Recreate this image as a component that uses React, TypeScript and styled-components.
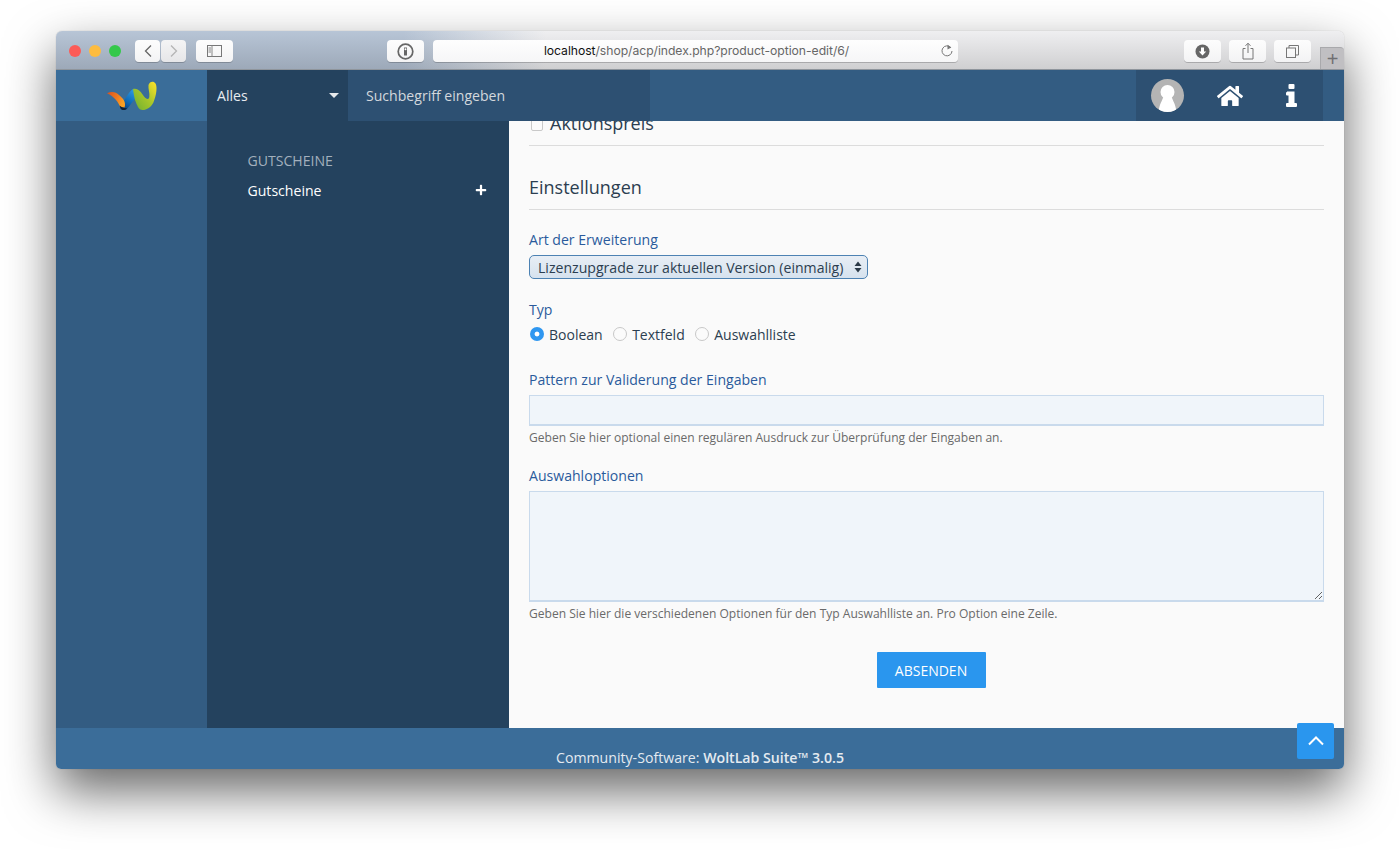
import React from "react";
import styled, { createGlobalStyle } from "styled-components";
import { FaHome, FaPlus } from "react-icons/fa";

const Global = createGlobalStyle`
  html, body { margin: 0; padding: 0; background: #fff; }
  body { font-family: "Open Sans", "Liberation Sans", sans-serif; width: 1400px; height: 850px; overflow: hidden; }
  * { box-sizing: border-box; }
`;
const Page = styled.div`
  padding: 31px 56px 0;
`;
const Win = styled.div`
  position: relative;
  width: 1288px;
  height: 738px;
  display: flex;
  flex-direction: column;
  border-radius: 6px 6px 5px 5px;
  box-shadow: 0 22px 50px rgba(0,0,0,.6), 0 0 1px rgba(0,0,0,.3);
`;
const Toolbar = styled.div`
  height: 39px;
  flex: none;
  display: flex;
  align-items: flex-start;
  padding: 9px 0 0 13px;
  border-radius: 6px 6px 0 0;
  border-bottom: 1px solid #8f959c;
  background:
    linear-gradient(180deg, rgba(255,255,255,.05), rgba(0,0,0,.13)),
    linear-gradient(90deg, #b4c2d4 0, #b4c2d4 27%, #eeeef0 38%, #eeeef0 100%);
`;
const Lights = styled.div`
  display: flex;
  gap: 8px;
  margin-top: 5px;
`;
const Light = styled.span<{ $c: string }>`
  width: 12px;
  height: 12px;
  border-radius: 50%;
  background: ${p => p.$c};
`;
const TBtn = styled.div<{ $w: number; $ml: number; $dim?: boolean }>`
  width: ${p => p.$w}px;
  height: 22px;
  margin-left: ${p => p.$ml}px;
  flex: none;
  display: flex;
  align-items: center;
  justify-content: center;
  border-radius: 4px;
  background: ${p => (p.$dim ? "linear-gradient(#f4f4f5,#e6e6e8)" : "linear-gradient(#fdfdfd,#f3f3f4)")};
  box-shadow: 0 1px 0 rgba(0,0,0,.2);
  color: #6a6a6c;
`;
const Url = styled.div`
  position: relative;
  width: 525px;
  height: 22px;
  margin-left: 9px;
  flex: none;
  border-radius: 4px;
  background: linear-gradient(#fefefe,#f6f6f7);
  box-shadow: 0 1px 0 rgba(0,0,0,.2);
  font: 12.2px/22px "Inter", "Liberation Sans", sans-serif;
  text-align: center;
  padding-left: 2px;
  color: #666;
  letter-spacing: -.05px;
  b { font-weight: 400; color: #111; }
`;
const Reload = styled.span`
  position: absolute;
  right: 4px;
  top: 4px;
  display: flex;
  color: #777;
`;
const NewTab = styled.div`
  width: 24px;
  height: 22px;
  margin: 7px 0 0 9px;
  flex: none;
  background: #c0bfc2;
  border-left: 1px solid #a9a9ac;
  border-top: 1px solid #a9a9ac;
  border-radius: 0 4px 0 0;
  color: #6f6f72;
  font: 300 20px/22px "Liberation Sans", sans-serif;
  text-align: center;
  display: flex;
  align-items: center;
  justify-content: center;
`;
const Header = styled.header`
  height: 51px;
  flex: none;
  display: flex;
  background: #335c82;
  color: #fff;
  font-size: 14.08px;
`;
const LogoCell = styled.div`
  width: 151px;
  display: flex;
  align-items: flex-start;
  justify-content: flex-start;
  padding: 11px 0 0 51px;
  background: #3a6d99;
`;
const Scope = styled.div`
  width: 141px;
  display: flex;
  align-items: center;
  justify-content: space-between;
  padding: 0 9px 0 10px;
  background: #24425e;
  color: #e8ecf0;
`;
const Caret = styled.span`
  width: 0;
  height: 0;
  border: 5px solid transparent;
  border-top: 5px solid #e6e9ec;
  border-bottom: 0;
`;
const Search = styled.div`
  width: 302px;
  display: flex;
  align-items: center;
  padding-left: 18px;
  background: #2d5072;
  color: #d3d8dd;
`;
const Spacer = styled.div`
  flex: 1;
`;
const UserNav = styled.nav`
  width: 187px;
  margin-right: 21px;
  display: flex;
  align-items: center;
  padding-left: 15px;
  background: #2d5072;
`;
const Avatar = styled.div`
  width: 33px;
  height: 33px;
  border-radius: 50%;
  overflow: hidden;
  background: #b4b4b4;
  flex: none;
`;
const NavIcon = styled.span<{ $ml: number }>`
  display: flex;
  margin-left: ${p => p.$ml}px;
`;
const Main = styled.div`
  flex: 1;
  min-height: 0;
  display: grid;
  grid-template-columns: 151px 302px 1fr;
  overflow: hidden;
`;
const Rail = styled.div`
  background: #335c82;
`;
const Side = styled.aside`
  background: #24425e;
  padding: 30px 22px 0 40.5px;
  font-size: 14.08px;
`;
const SideHead = styled.div`
  height: 20px;
  line-height: 20px;
  color: #a3b0bd;
`;
const SideItem = styled.div`
  margin-top: 9px;
  height: 20px;
  display: flex;
  align-items: center;
  justify-content: space-between;
  color: #fff;
`;
const Content = styled.main`
  background: #fafafa;
  padding: 0 20px;
  color: #2c3e50;
  font-size: 14.08px;
`;
const OptionHead = styled.div`
  margin-top: -9px;
  height: 34px;
  padding: 0 0 12px 2px;
  border-bottom: 1px solid #dcdcdc;
  display: flex;
  align-items: center;
  gap: 7px;
  font-size: 18px;
  line-height: 24px;
`;
const SmallBox = styled.span`
  width: 12px;
  height: 15px;
  margin-top: 1px;
  background: #fbfbfb;
  border: 1px solid #c9c9c9;
  border-radius: 2px;
  flex: none;
`;
const SectionTitle = styled.h2`
  margin: 29px 0 0;
  height: 35px;
  font-size: 18px;
  font-weight: 400;
  line-height: 24px;
  border-bottom: 1px solid #dcdcdc;
`;
const Label = styled.label<{ $mt: number }>`
  display: block;
  margin-top: ${p => p.$mt}px;
  height: 20px;
  line-height: 20px;
  color: #2a5a9c;
`;
const SelectWrap = styled.div`
  position: relative;
  width: 339px;
  height: 24px;
  margin-top: 5px;
`;
const Select = styled.select`
  appearance: none;
  width: 100%;
  height: 100%;
  padding: 0 0 0 8px;
  border: 1px solid #4d82b3;
  border-radius: 5px;
  background: linear-gradient(#e8eef5, #d6e2ee);
  color: #2c3e50;
  font: 14.1px "Open Sans", sans-serif;
`;
const Arrows = styled.svg`
  position: absolute;
  right: 6px;
  top: 6px;
  pointer-events: none;
`;
const RadioRow = styled.div`
  display: flex;
  align-items: center;
  height: 20px;
  margin-top: 4px;
  font-size: 14px;
`;
const RadioLabel = styled.label`
  display: flex;
  align-items: center;
  margin-right: 9.5px;
  margin-left: 1px;
  gap: 5px;
`;
const Radio = styled.input`
  appearance: none;
  width: 14px;
  height: 14px;
  margin: 0;
  border-radius: 50%;
  border: 1px solid #c8c8c8;
  background: #fbfbfb;
  &:checked {
    border: 0;
    background: radial-gradient(circle closest-side, #fff 0 2px, #2f97f0 2.8px);
  }
`;
const TextInput = styled.input`
  display: block;
  width: 100%;
  height: 31px;
  margin: 5px 0 0;
  background: #f0f5fa;
  border: 1px solid #c9daec;
  border-bottom-width: 2px;
`;
const Area = styled.textarea`
  display: block;
  width: 100%;
  height: 111px;
  margin: 5px 0 0;
  background: #f0f5fa;
  border: 1px solid #c9daec;
  border-bottom-width: 2px;
  resize: vertical;
`;
const Hint = styled.small`
  display: block;
  margin-top: 3px;
  height: 18px;
  line-height: 18px;
  font-size: 12.06px;
  color: #6a6a6a;
`;
const FormEnd = styled.div`
  display: flex;
  justify-content: center;
  margin-top: 29px;
  padding-left: 9px;
`;
const Submit = styled.button`
  width: 109px;
  height: 36px;
  border: 0;
  border-radius: 1px;
  background: #2a96ee;
  color: #fff;
  font: 14px "Open Sans", sans-serif;
  text-transform: uppercase;
`;
const Footer = styled.footer`
  height: 41px;
  flex: none;
  background: #3b6d99;
  color: #e4eaf0;
  text-align: center;
  font-size: 14.15px;
  line-height: 20px;
  padding-top: 20px;
  overflow: hidden;
  border-radius: 0 0 5px 5px;
  b { font-weight: 600; }
`;
const ToTop = styled.div`
  position: absolute;
  right: 10px;
  bottom: 10px;
  width: 37px;
  height: 36px;
  border-radius: 2px;
  background: #2a96ee;
  display: flex;
  align-items: center;
  justify-content: center;
`;

const Logo = () => (
  <svg width="51" height="29" viewBox="0 0 51 29" style={{ overflow: "visible" }}>
    <defs>
      <linearGradient id="lgO" x1="0" x2="1" y1="0" y2=".4">
        <stop offset="0" stopColor="#d8501f" />
        <stop offset=".6" stopColor="#ee7a20" />
        <stop offset="1" stopColor="#f79f24" />
      </linearGradient>
      <linearGradient id="lgB" x1=".7" x2=".2" y1="0" y2="1">
        <stop offset="0" stopColor="#2f9ae0" />
        <stop offset=".55" stopColor="#0f6dbb" />
        <stop offset="1" stopColor="#0b3f7c" />
      </linearGradient>
      <linearGradient id="lgG" x1=".05" x2=".85" y1=".75" y2="0">
        <stop offset="0" stopColor="#7cb52f" />
        <stop offset=".5" stopColor="#a9c72a" />
        <stop offset="1" stopColor="#f4de2a" />
      </linearGradient>
    </defs>
    <path fill="url(#lgB)" d="M14 26C17 20 21 11 26.300 7.700L30 16C26 19 23 25 20 28C18 29.500 15 29 14 26Z" />
    <path fill="url(#lgO)" d="M0 12.300C4 10 9 10.500 12 14C14 15.500 15.500 17 17 19.500C18 21.500 18.500 24 17.500 26.500L13 26C11.500 21 7 15.500 0 12.300Z" />
    <path fill="#0f2238" d="M12.500 24.500C14 26 17 27 20 27.500C18 29.500 15 29.500 13.500 27.500Z" />
    <path fill="url(#lgG)" d="M26 8C31 6.500 34 11 37 15.500C39 18 41.500 19.500 42.300 16C43 12 41 8 41.500 4C42.500 .5 46.500 -.5 48.500 2.500C50.500 6 49.500 14 46.300 21.700C44 26 40 29 35.500 29C31.500 29 30 24 28 19C27 15 26.500 11 26 8Z" />
  </svg>
);

export default function App() {
  return (
    <Page>
      <Global />
      <Win>
        <Toolbar>
          <Lights>
            <Light $c="#fc5b57" />
            <Light $c="#fdbc40" />
            <Light $c="#34c84a" />
          </Lights>
          <TBtn $w={25} $ml={14}>
            <svg width="10" height="14" viewBox="0 0 10 14"><path d="M8 1.500 2.500 7 8 12.500" fill="none" stroke="#666" strokeWidth="1.3" /></svg>
          </TBtn>
          <TBtn $w={25} $ml={1} $dim>
            <svg width="10" height="14" viewBox="0 0 10 14"><path d="M2 1.500 7.500 7 2 12.500" fill="none" stroke="#b5b5b5" strokeWidth="1.3" /></svg>
          </TBtn>
          <TBtn $w={37} $ml={10}>
            <svg width="15" height="12" viewBox="0 0 15 12"><rect x=".5" y=".5" width="14" height="11" fill="none" stroke="#777" /><path d="M5 .5v11M1.500 3H4M1.500 5H4M1.500 7H4" stroke="#888" fill="none" /></svg>
          </TBtn>
          <TBtn $w={37} $ml={154}>
            <svg width="17" height="17" viewBox="0 0 17 17"><circle cx="8.500" cy="8.500" r="7.300" fill="none" stroke="#666" strokeWidth="1.700" /><path d="M7 4.500h3v8H7z" fill="#666" /><circle cx="8.500" cy="6.300" r="1" fill="#fff" /></svg>
          </TBtn>
          <Url>
            <b>localhost</b>/shop/acp/index.php?product-option-edit/6/
            <Reload>
              <svg width="14" height="14" viewBox="0 0 14 14"><path d="M10.800 3.600A5 5 0 1 0 12 7" fill="none" stroke="#777" strokeWidth="1" /><path d="M7.500 0.800 11.300 3.400 7.500 5.400Z" fill="#777" /></svg>
            </Reload>
          </Url>
          <TBtn $w={37} $ml={226}>
            <svg width="15" height="15" viewBox="0 0 15 15"><circle cx="7.500" cy="7.500" r="7" fill="#666" /><path d="M6 3.500h3v4h2.200l-3.700 4-3.700-4H6z" fill="#fff" /></svg>
          </TBtn>
          <TBtn $w={37} $ml={8}>
            <svg width="12" height="18" viewBox="0 0 12 18"><path d="M3.500 6.500H1v10.500h10V6.500H8.500" fill="none" stroke="#777" /><path d="M6 11V1.500M3.500 3.800 6 1.200l2.500 2.600" fill="none" stroke="#777" /></svg>
          </TBtn>
          <TBtn $w={37} $ml={8}>
            <svg width="13" height="13" viewBox="0 0 13 13"><rect x=".5" y="3" width="9" height="9.500" fill="none" stroke="#777" /><path d="M3 3V.5h9.500V10H9.500" fill="none" stroke="#777" /></svg>
          </TBtn>
          <NewTab>+</NewTab>
        </Toolbar>
        <Header>
          <LogoCell><Logo /></LogoCell>
          <Scope>Alles<Caret /></Scope>
          <Search>Suchbegriff eingeben</Search>
          <Spacer />
          <UserNav>
            <Avatar>
              <svg width="33" height="33" viewBox="0 0 33 33">
                <circle cx="16.500" cy="13" r="7" fill="#fff" />
                <path d="M12.500 17h8c1 5 4 7 5 16H7.500c1-9 4-11 5-16z" fill="#fff" />
              </svg>
            </Avatar>
            <NavIcon $ml={33}><FaHome size={26} color="#fff" /></NavIcon>
            <NavIcon $ml={43}>
              <svg width="11" height="23" viewBox="0 0 11 23"><rect x="2.500" y="0" width="6" height="5" rx="1" fill="#fff" /><path d="M1 7.500h7.500V19H10a1 1 0 0 1 1 1v2a1 1 0 0 1-1 1H1a1 1 0 0 1-1-1v-2a1 1 0 0 1 1-1h1.500v-7.500H1a1 1 0 0 1-1-1v-1.500a1 1 0 0 1 1-1z" fill="#fff" /></svg>
            </NavIcon>
          </UserNav>
        </Header>
        <Main>
          <Rail />
          <Side>
            <SideHead>GUTSCHEINE</SideHead>
            <SideItem>Gutscheine<FaPlus size={12} color="#fff" /></SideItem>
          </Side>
          <Content>
            <OptionHead><SmallBox />Aktionspreis</OptionHead>
            <SectionTitle>Einstellungen</SectionTitle>
            <Label $mt={20}>Art der Erweiterung</Label>
            <SelectWrap>
              <Select defaultValue="a"><option value="a">Lizenzupgrade zur aktuellen Version (einmalig)</option></Select>
              <Arrows width="8" height="12" viewBox="0 0 8 12"><path d="M4 .5 7.500 5H.5zM4 11.500 .5 7h7z" fill="#2b3a48" /></Arrows>
            </SelectWrap>
            <Label $mt={21}>Typ</Label>
            <RadioRow>
              <RadioLabel><Radio type="radio" name="t" defaultChecked />Boolean</RadioLabel>
              <RadioLabel><Radio type="radio" name="t" />Textfeld</RadioLabel>
              <RadioLabel><Radio type="radio" name="t" />Auswahlliste</RadioLabel>
            </RadioRow>
            <Label $mt={26}>Pattern zur Validerung der Eingaben</Label>
            <TextInput />
            <Hint>Geben Sie hier optional einen regulären Ausdruck zur Überprüfung der Eingaben an.</Hint>
            <Label $mt={19}>Auswahloptionen</Label>
            <Area />
            <Hint>Geben Sie hier die verschiedenen Optionen für den Typ Auswahlliste an. Pro Option eine Zeile.</Hint>
            <FormEnd><Submit>Absenden</Submit></FormEnd>
          </Content>
        </Main>
        <Footer>Community-Software: <b>WoltLab Suite™ 3.0.5</b></Footer>
        <ToTop>
          <svg width="16" height="10" viewBox="0 0 16 10"><path d="M1 8.500 8 1.500l7 7" fill="none" stroke="#fff" strokeWidth="2" /></svg>
        </ToTop>
      </Win>
    </Page>
  );
}
